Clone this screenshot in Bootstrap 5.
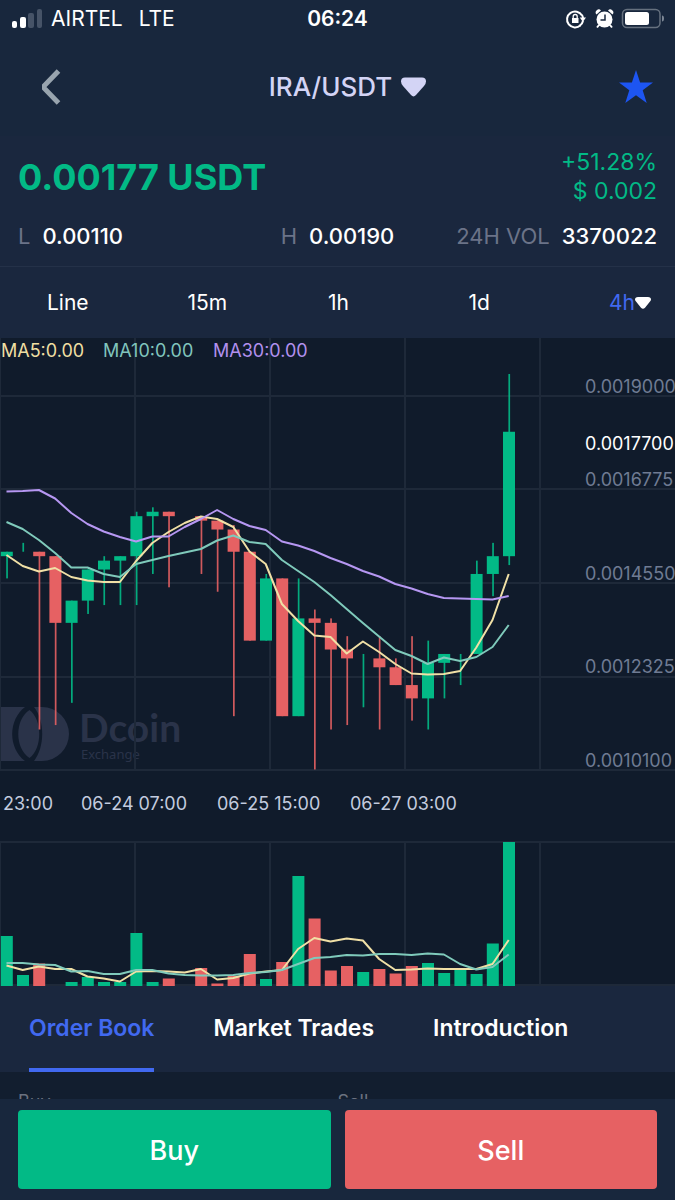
<!DOCTYPE html>
<html lang="en">
<head>
<meta charset="utf-8">
<meta name="viewport" content="width=device-width, initial-scale=1">
<title>IRA/USDT</title>
<link rel="stylesheet" href="https://cdn.jsdelivr.net/npm/bootstrap@5.3.0/dist/css/bootstrap.min.css">
<style>
  :root {
    --panel: #1a273e;
    --panel-top: #18273d;
    --chart: #101b2b;
    --up: #02ba86;
    --down: #e66163;
    --accent: #4169f0;
    --muted-text: #6b7388;
  }
  body { background: #121e2f; color: #fff; font-family: Inter, "Liberation Sans", sans-serif; }
  .plain { background: none; border: 0; padding: 0; color: inherit; font: inherit; display: flex; align-items: center; }
  .top-area { background: var(--panel-top); }
  .status-bar { height: 38px; font-size: 21px; line-height: 24px; padding: 0 11px; }
  .three-up { display: grid; grid-template-columns: 1fr auto 1fr; align-items: center; }
  .title-bar { height: 98px; padding: 0 21px 0 42px; }
  .title-bar .pair { font-size: 26px; line-height: 32px; font-weight: 500; color: #d3d4f5; gap: 8px; }
  .summary { background: var(--panel); padding: 12px 18px 16px; border-bottom: 1px solid #243148; }
  .price { font-size: 36px; line-height: 56px; font-weight: 700; color: var(--up); }
  .change { font-size: 23px; line-height: 29px; color: var(--up); }
  .stats { font-size: 22px; line-height: 28px; margin-top: 16px; }
  .stats dt { font-weight: 400; color: var(--muted-text); }
  .stats dd { font-weight: 500; margin: 0; }
  .stats dl { margin: 0; gap: 12px; }
  .intervals { background: var(--panel); height: 71px; padding-left: 47px; font-size: 21px; }
  .intervals .plain { flex: 1 1 0; }
  .intervals .plain:last-child { flex: 0 0 66px; color: var(--accent); }
  .chart { background: var(--chart); }
  .chart svg { width: 100%; height: auto; display: block; }
  .grid-lines { stroke: #1e2939; stroke-width: 2; fill: none; }
  .axis { font-size: 18px; fill: #6f7b93; }
  .dates { font-size: 18px; fill: #c3cbdf; }
  .ma { fill: none; stroke-width: 2; stroke-linejoin: round; }
  .tabs { background: var(--panel); height: 86px; padding: 0 29px; gap: 59px; font-size: 23px; font-weight: 600; }
  .tabs .plain { border-bottom: 4px solid transparent; border-top: 2px solid transparent; }
  .tabs .plain.active { color: var(--accent); border-bottom-color: var(--accent); }
  .book { padding: 19px 18px 0; font-size: 18px; line-height: 22px; color: #6b7280; min-height: 0; }
  .trade-bar { background: var(--panel-top); padding: 11px 18px; gap: 14px; }
  .trade-bar .btn { height: 79px; border: 0; border-radius: 4px; padding: 8px 12px 4px; color: #fff; font-size: 27px; font-weight: 500; }
  .buy, .buy:hover { background: var(--up); }
  .sell, .sell:hover { background: var(--down); }
</style>
</head>
<body>
<div class="vh-100 d-flex flex-column overflow-hidden">
  <header class="top-area flex-shrink-0">
    <div class="status-bar three-up">
      <div class="d-flex align-items-center">
        <svg width="32" height="20" viewBox="0 0 32 20" class="me-2" aria-hidden="true">
          <rect x="1" y="12" width="5" height="7" rx="2" fill="#fff"/><rect x="9" y="8" width="6" height="11" rx="2" fill="#fff"/>
          <rect x="17" y="4" width="6" height="15" rx="2" fill="#465367"/><rect x="26" y="0" width="5" height="19" rx="2" fill="#465367"/>
        </svg>
        <span>AIRTEL</span><span class="ms-3">LTE</span>
      </div>
      <span class="fw-semibold">06:24</span>
      <div class="d-flex justify-content-end align-items-center">
        <svg width="99" height="22" viewBox="0 0 99 22" aria-hidden="true">
          <path d="M15.500 17.300A8 8 0 1 1 17 7.500" fill="none" stroke="#fff" stroke-width="2"/>
          <path d="M14.500 18A8 8 0 0 0 18 13M17 7A8 8 0 0 1 18 10" fill="none" stroke="#fff" stroke-width="2"/>
          <path d="M14.800 9.500h6.200l-3.100 4.500z" fill="#fff"/>
          <rect x="7" y="10" width="6.500" height="5" fill="#fff"/><path d="M8.200 10V8.500a2 2 0 0 1 4 0V10" fill="none" stroke="#fff" stroke-width="1.300"/>
          <circle cx="39.500" cy="11.500" r="8" fill="#fff"/><path d="M31.500 6.500a3 3 0 0 1 4.500-4zM47.500 6.500a3 3 0 0 0-4.500-4z" fill="#fff"/>
          <path d="M34 17l-2 2.500M45 17l2 2.500" stroke="#fff" stroke-width="2"/>
          <path d="M40 6.500v5.500h-4.500" fill="none" stroke="#18273d" stroke-width="1.500"/>
          <rect x="57.500" y="1.500" width="37.500" height="18" rx="4.500" fill="none" stroke="#66717f" stroke-width="1.500"/>
          <rect x="60" y="4" width="24" height="13" rx="2.500" fill="#fff"/>
          <path d="M97 7.500q2 0 2 3t-2 3z" fill="#7d8796"/>
        </svg>
      </div>
    </div>
    <div class="title-bar three-up">
      <button class="plain" aria-label="Back">
        <svg width="20" height="38" viewBox="5 0 20 38"><path d="M21.500 3 6 19l15.500 16" fill="none" stroke="#98a4ae" stroke-width="5"/></svg>
      </button>
      <button class="plain pair">IRA/USDT
        <svg width="27" height="22" viewBox="0 0 27 22" aria-hidden="true"><path d="M5 1.500h17q4 0 4 4 0 2-2 4.500l-8 9q-2.500 2.800-5 0l-8-9Q1 7.500 1 5.500q0-4 4-4z" fill="#d3d4f5"/></svg>
      </button>
      <button class="plain justify-content-end" aria-label="Favourite">
        <svg width="36" height="34" viewBox="0 0 36 34"><path d="M18 0l4.100 12.500H35L24.700 20.300 28.700 33 18 25.300 7.300 33l4-12.700L1 12.500h12.900z" fill="#1d55f2"/></svg>
      </button>
    </div>
  </header>

  <section class="summary flex-shrink-0">
    <div class="d-flex justify-content-between align-items-center">
      <div class="price">0.00177 USDT</div>
      <div class="change text-end">+51.28%<br>$ 0.002</div>
    </div>
    <div class="stats three-up">
      <dl class="d-flex"><dt>L</dt><dd>0.00110</dd></dl>
      <dl class="d-flex"><dt>H</dt><dd>0.00190</dd></dl>
      <dl class="d-flex justify-content-end"><dt>24H VOL</dt><dd>3370022</dd></dl>
    </div>
  </section>

  <div class="intervals d-flex flex-shrink-0">
    <button class="plain">Line</button>
    <button class="plain">15m</button>
    <button class="plain">1h</button>
    <button class="plain">1d</button>
    <button class="plain">4h<svg width="16" height="12" viewBox="0 0 16 12" aria-hidden="true"><path d="M3 0h10q3 0 3 2.500 0 1-1 2l-5 6.200q-2 2-4 0L1 4.500q-1-1-1-2Q0 0 3 0z" fill="#fff"/></svg></button>
  </div>

  <section class="chart flex-shrink-0">
    <svg viewBox="0 338 675 648" role="img" aria-label="IRA/USDT price and volume chart">
      <g fill="#2a3349">
        <path d="M0 707h25C8 720 8 748 25 761H0z"/>
        <path d="M29.500 710c13 10 13 38 0 48-15-10-15-38 0-48z"/>
        <path d="M34 707h8a27 27 0 0 1 0 54h-8c11-14 11-40 0-54z"/>
        <text x="79" y="742" font-family="Lato" font-weight="700" font-size="39">Dcoin</text>
        <text x="81" y="759" font-family="Noto Sans" font-size="13">Exchange</text>
      </g>
      <path class="grid-lines" d="M0 396H675M0 489H675M0 583H675M0 677H675M0 770H675M0 842H675M0 985H675M0 338V770M135 338V770M270 338V770M405 338V770M540 338V770M0 842V986M135 842V986M270 842V986M405 842V986M540 842V986"/>
      <g id="candles"></g>
      <g id="volumes"></g>
      <g id="averages"></g>
      <g font-size="18">
        <text x="1" y="357" fill="#efdfa2">MA5:0.00</text>
        <text x="103" y="357" fill="#80c5bd">MA10:0.00</text>
        <text x="213" y="357" fill="#b290ee">MA30:0.00</text>
      </g>
      <g class="axis">
        <text x="585" y="393">0.0019000</text>
        <text x="585" y="450" fill="#fff">0.0017700</text>
        <text x="585" y="486">0.0016775</text>
        <text x="585" y="580">0.0014550</text>
        <text x="585" y="673">0.0012325</text>
        <text x="585" y="767">0.0010100</text>
      </g>
      <g class="dates">
        <text x="3" y="810">23:00</text>
        <text x="81" y="810">06-24 07:00</text>
        <text x="217" y="810">06-25 15:00</text>
        <text x="350" y="810">06-27 03:00</text>
      </g>
    </svg>
  </section>

  <nav class="tabs d-flex flex-shrink-0">
    <button class="plain active">Order Book</button>
    <button class="plain">Market Trades</button>
    <button class="plain">Introduction</button>
  </nav>

  <section class="book row g-0 flex-grow-1 overflow-hidden">
    <div class="col-6">Buy</div>
    <div class="col-6">Sell</div>
  </section>

  <footer class="trade-bar d-flex flex-shrink-0">
    <button class="btn buy flex-fill w-50">Buy</button>
    <button class="btn sell flex-fill w-50">Sell</button>
  </footer>
</div>

<script src="https://cdn.jsdelivr.net/npm/bootstrap@5.3.0/dist/js/bootstrap.bundle.min.js"></script>
<script>
  const UP = '#02ba86', DOWN = '#e66163';
  const NS = 'http://www.w3.org/2000/svg';
  const add = (parent, tag, attrs) => {
    const el = document.createElementNS(NS, tag);
    for (const k in attrs) el.setAttribute(k, attrs[k]);
    document.getElementById(parent).appendChild(el);
  };
  const cx = i => 6.8 + i * 16.2;
  const py = ticks => 769.5 - ticks * 4.444;

  // [rising, high, body top, body bottom, low] in ticks of 0.00001 above 0.00101
  const candles = [
    [1,49,49,48,43],[1,51,49,49,49],[0,49,49,48,9],[0,48,48,33,10],[1,38,38,33,15],[1,45,45,38,35],
    [1,48,47,45,37],[1,48,48,47,37],[1,58,57,48,37],[1,59,58,57,44],[0,58,58,57,41],null,
    [0,57,57,56,44],[0,56,56,54,40],[0,55,54,49,12],[0,49,49,29,29],[1,44,43,29,29],[0,43,43,12,12],
    [1,43,34,12,12],[0,36,34,33,0],[0,34,33,27,9],[0,30,27,25,10],[1,26,14,14,14],[0,30,25,23,9],
    [0,25,23,19,19],[0,30,19,16,11],[1,29,24,16,9],[1,26,26,24,16],[1,26,19,19,19],[1,47,44,26,26],
    [1,51,48,44,39],[1,89,76,48,46]
  ];
  candles.forEach((c, i) => {
    if (!c) return;
    const [up, hi, top, bottom, lo] = c, fill = up ? UP : DOWN;
    add('candles', 'rect', { x: cx(i) - 0.6, y: py(hi), width: 1.7, height: py(lo) - py(hi), fill, opacity: 0.9 });
    add('candles', 'rect', { x: cx(i) - 6, y: py(top), width: 12, height: py(bottom) - py(top), fill });
  });

  // volume bar heights; negative values are falling periods
  const volumes = [50,11,-22.5,0,4,9,4,4,53,4,-7.5,0,-18,-2.5,-10,-32,7,-24,110,-67.5,-15.5,-20,14,-17,-12.5,-20,23,13,16,12,42.5,144];
  volumes.forEach((v, i) => {
    const h = Math.abs(v);
    add('volumes', 'rect', { x: cx(i) - 6, y: 986 - h, width: 12, height: h, fill: v < 0 ? DOWN : UP });
  });

  const averages = {
    '#f0e0a6': [
      [555,566,571.5,568,577,580.5,582,582,561,543,532,523,516.5,519,527,551.5,564,604,621,635.5,637,653.5,641.5,652,664,673.5,674.5,674,671,647.5,620,574],
      [965.5,970,966.5,969,969,976.5,978.5,981.5,971.5,971,971.5,972.5,969,979.5,978,973.5,971.5,970,949,938,941.5,938.5,940.5,959,970,969.5,968.5,969,969,969,964,940]
    ],
    '#7fcabb': [
      [522,529,540,553,567.5,567.5,574,577,564,560,556,552.5,549,540.5,535.5,542,544,560,571,582,595,609,623,636.5,650,656,664,657.5,661,657,647,625],
      [963,963,964.5,965,971.5,971,974,974,970,970,973.5,975,975.5,975.5,975,973,972,970,964,958,957,955,955.5,954,954,955,953.5,954.5,964,969.5,967,954.5]
    ],
    '#b697f2': [
      [491.5,491,490,498.5,513,524,531.5,537,541.5,536.5,536.5,527,519,510,519,526,530,541.5,545.5,551,558,564,571,576.5,584,588.5,594,598,598.5,599,599.5,596]
    ]
  };
  for (const stroke in averages)
    for (const ys of averages[stroke])
      add('averages', 'polyline', { class: 'ma', stroke, points: ys.map((y, i) => cx(i) - 0.3 + ',' + y).join(' ') });
</script>
</body>
</html>
